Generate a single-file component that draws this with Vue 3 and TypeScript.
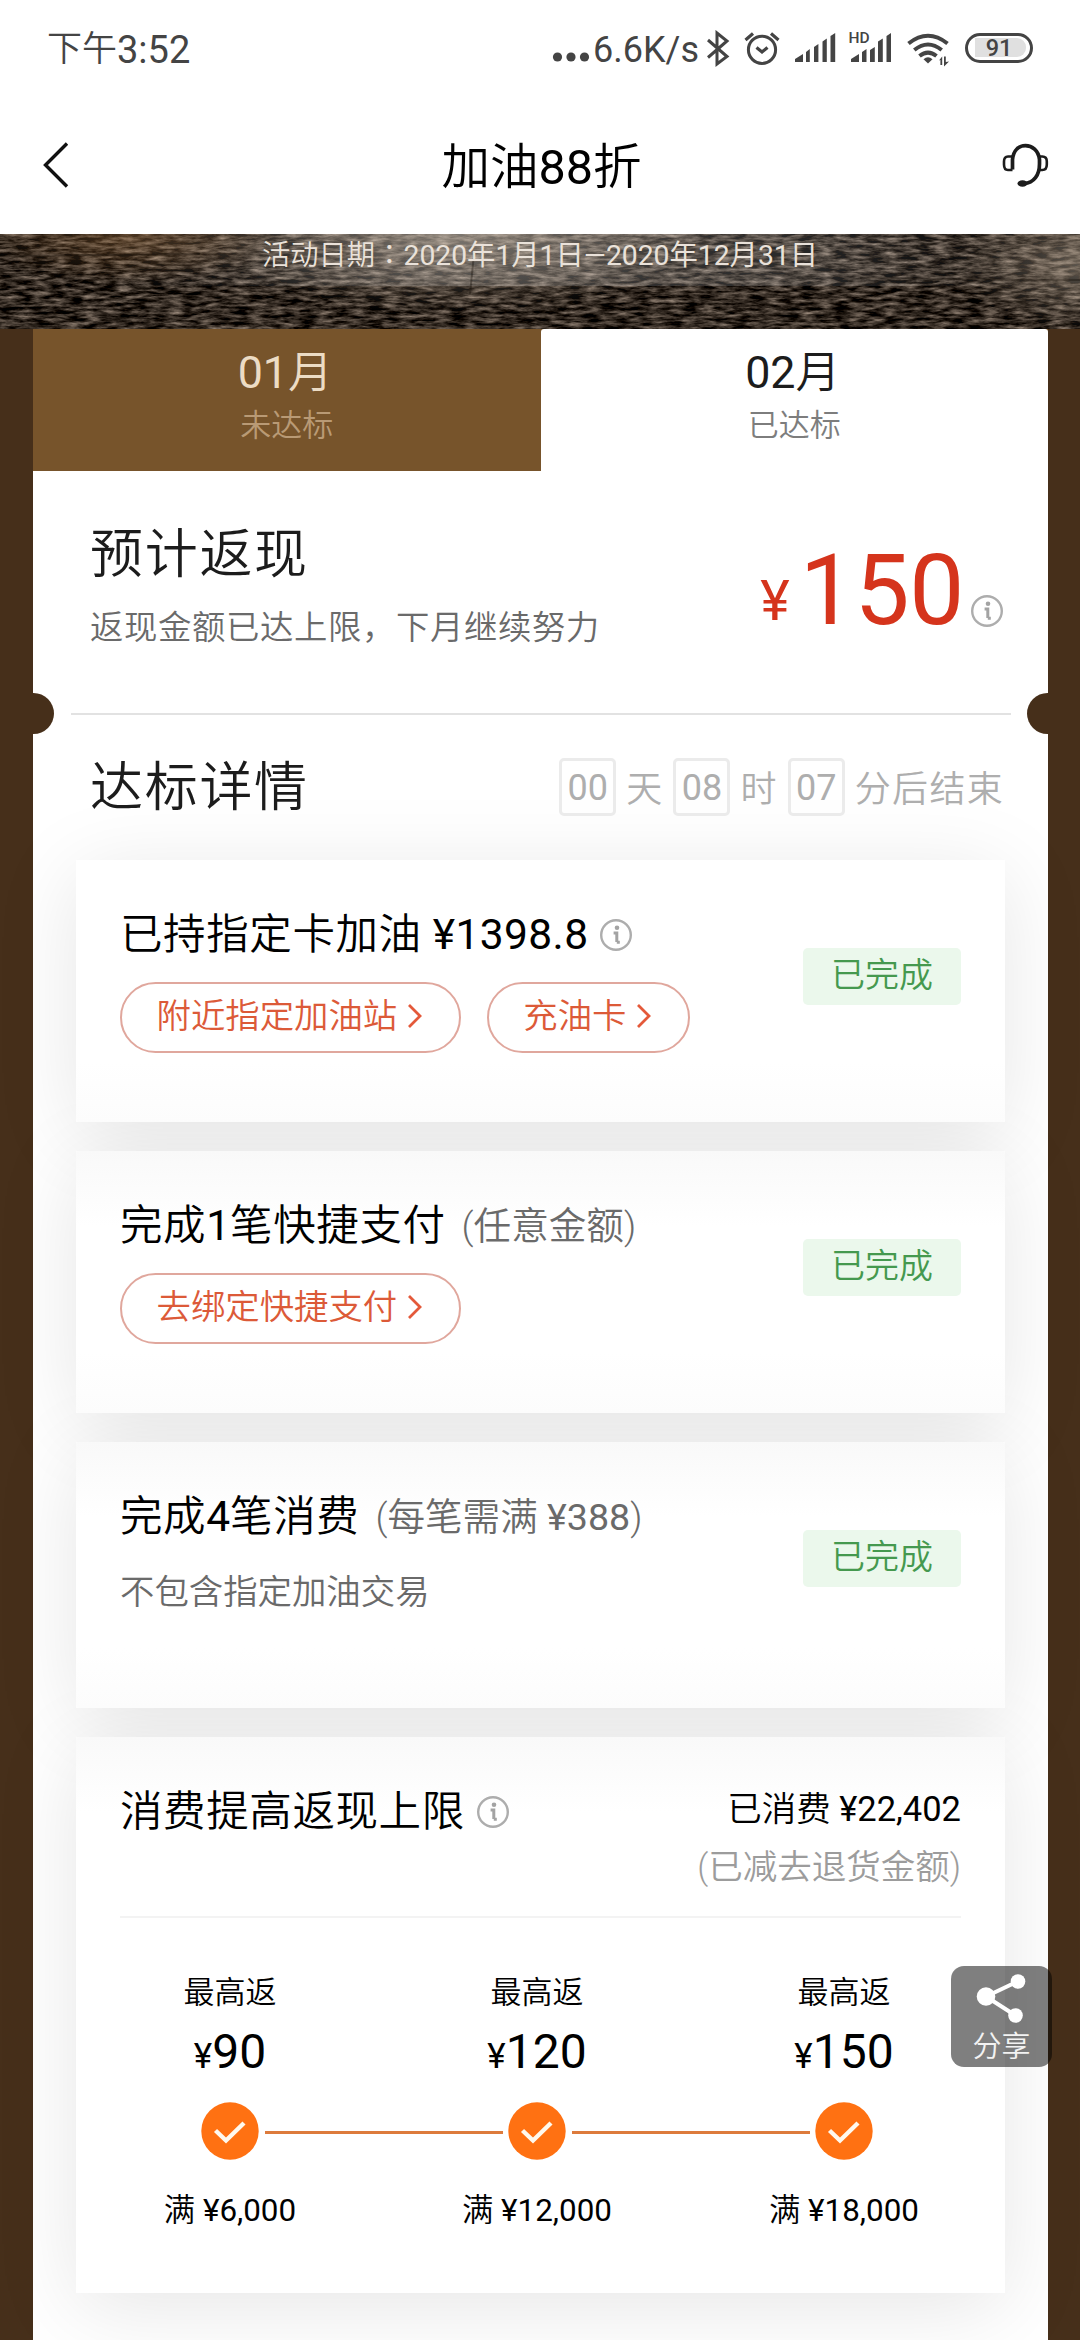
<script setup lang="ts">
import { h, type FunctionalComponent } from 'vue'

interface Task {
  id: string
  head: string
  count?: string
  tail?: string
  amount?: string
  info?: boolean
  note?: string
  noteAmount?: string
  desc?: string
  actions?: string[]
  height: number
}

interface Step {
  reward: string
  threshold: string
}

const months = [
  { num: '01', status: '未达标', active: false },
  { num: '02', status: '已达标', active: true },
]

const countdown = [
  { value: '00', unit: '天' },
  { value: '08', unit: '时' },
  { value: '07', unit: '分后结束' },
]

const tasks: Task[] = [
  { id: 'fuel', head: '已持指定卡加油', amount: '¥1398.8', info: true, actions: ['附近指定加油站', '充油卡'], height: 262 },
  { id: 'quick', head: '完成', count: '1', tail: '笔快捷支付', note: '任意金额', actions: ['去绑定快捷支付'], height: 262 },
  { id: 'spend', head: '完成', count: '4', tail: '笔消费', note: '每笔需满', noteAmount: '¥388', desc: '不包含指定加油交易', height: 266 },
]

const steps: Step[] = [
  { reward: '90', threshold: '6,000' },
  { reward: '120', threshold: '12,000' },
  { reward: '150', threshold: '18,000' },
]

const InfoIcon: FunctionalComponent = () =>
  h('svg', { width: 34, height: 34, viewBox: '0 0 34 34', fill: 'none' }, [
    h('circle', { cx: 17, cy: 17, r: 14.8, stroke: '#adadad', 'stroke-width': 2.4 }),
    h('circle', { cx: 18, cy: 9.8, r: 2.3, fill: '#a3a3a3' }),
    h('path', { d: 'M14.6 14.9h3.2v9.2M17.8 24.3h3', stroke: '#a3a3a3', 'stroke-width': 3 }),
  ])

const Chevron: FunctionalComponent = () =>
  h('svg', { width: 16, height: 26, viewBox: '0 0 16 26', fill: 'none' }, [
    h('path', { d: 'M2 2l11 11L2 24', stroke: '#e4593a', 'stroke-width': 2.8 }),
  ])
</script>

<template>
  <div class="screen">
    <header class="status">
      <div class="clock"><span class="clock-cn">下午</span>3:52</div>
      <div class="status-right">
        <svg class="dots" width="38" height="12" viewBox="0 0 38 12" fill="#444">
          <circle cx="5.5" cy="6" r="4.6" /><circle cx="19" cy="6" r="4.6" /><circle cx="32.5" cy="6" r="4.6" />
        </svg>
        <span class="speed">6.6K/s</span>
        <svg class="status-icons" width="260" height="40" viewBox="700 30 260 40" fill="none" stroke="#444">
          <path d="M707 40l19 16.5-10 7.5V33l10 8-19 16.5" stroke-width="3" />
          <circle cx="761" cy="49.8" r="13.6" stroke-width="3" />
          <path d="M744.5 40l7.5-6.5M770 33.5l7.5 6.5M755.5 47.5l5.5 4.5 5.5-4.5" stroke-width="3.2" />
          <g fill="#444" stroke="none">
            <path d="M794 62v-3l8-5v8zM805 52l3.8-3v13H805zM813 47l4.4-3v18H813zM821.5 41.5l4.3-3V62h-4.3zM829.5 36l4.7-3v29h-4.7z" />
            <path d="M850 62v-3l8-5v8zM861 52l4.5-3v13H861zM869 50l4.8-3v15H869zM877 41.5l4.8-3V62H877zM885.5 36l4.5-3v29h-4.5z" />
            <path d="M927 63.5l-4.5-4.3q4.500-3.800 9 0z" />
            <path d="M938 60.5l3.2-4V65h-1.8v-5zM943 56.5h1.8V62l3.2-.6-5 5z" />
          </g>
          <path d="M907.5 43.5q19.500-15.500 39 0M913.300 50q13.700-11 27.400 0M918.500 56q8.500-6.800 17 0" stroke-width="4" />
          <text x="847.5" y="43" class="hd">HD</text>
        </svg>
        <div class="battery"><span>91</span></div>
      </div>
    </header>

    <nav class="nav">
      <svg width="30" height="50" viewBox="0 0 30 50" fill="none" stroke="#111" stroke-width="3.4">
        <path d="M26 3.5L4.5 25 26 46.5" />
      </svg>
      <h1>加油<span>88</span>折</h1>
      <svg width="50" height="46" viewBox="0 0 50 46" fill="none" stroke="#1c1c1c" stroke-width="3.7">
        <path d="M11.5 27.5V17.5C12.5 8 18 3.6 24.5 3.6S37.5 8.5 38.5 17.5V22C38.5 33 33 41 23 41.5" />
        <path d="M11.5 14.5H7q-4 0-4 5v3q0 5.500 4 5.500h4.500M38.500 14.500h2.800q4.500 0 4.500 5v3q0 5.500-4.500 5.500H37" stroke-width="2.6" />
        <ellipse cx="21.5" cy="41.5" rx="5" ry="3.2" fill="#1c1c1c" stroke="none" />
      </svg>
    </nav>

    <section class="banner">
      <svg class="wood" width="1080" height="95" viewBox="0 0 1080 95">
        <defs>
          <filter id="grain" x="0" y="0" width="100%" height="100%" color-interpolation-filters="sRGB">
            <feTurbulence type="fractalNoise" baseFrequency="0.06 0.26" numOctaves="4" seed="8" />
            <feColorMatrix values="0.95 0 0 0 -0.28  0.88 0 0 0 -0.28  0.82 0 0 0 -0.28  0 0 0 0 1" />
          </filter>
          <radialGradient id="glowMid" cx="0.5" cy="0.5" r="0.5">
            <stop offset="0" stop-color="#d8c8b4" stop-opacity="0.45" />
            <stop offset="1" stop-color="#d8c8b4" stop-opacity="0" />
          </radialGradient>
          <radialGradient id="glowWarm" cx="0.5" cy="0.5" r="0.5">
            <stop offset="0" stop-color="#a87848" stop-opacity="0.4" />
            <stop offset="1" stop-color="#a87848" stop-opacity="0" />
          </radialGradient>
          <linearGradient id="veil" x1="0" x2="1" y1="0" y2="0">
            <stop offset="0" stop-color="#fff" stop-opacity="0" />
            <stop offset="0.35" stop-color="#fff" stop-opacity="0.18" />
            <stop offset="0.7" stop-color="#fff" stop-opacity="0.18" />
            <stop offset="1" stop-color="#fff" stop-opacity="0" />
          </linearGradient>
        </defs>
        <rect width="1080" height="95" filter="url(#grain)" />
        <ellipse cx="455" cy="0" rx="260" ry="80" fill="url(#glowMid)" />
        <ellipse cx="130" cy="0" rx="160" ry="50" fill="url(#glowWarm)" />
        <ellipse cx="1085" cy="28" rx="130" ry="70" fill="url(#glowMid)" />
        <rect x="100" width="940" height="52" fill="url(#veil)" />
        <path d="M0 22L200 20M860 44L1080 46M470 60l4-40" fill="none" stroke="#120b06" stroke-opacity="0.35" stroke-width="2" />
      </svg>
      <p>活动日期<span class="colon">：</span><span class="num">2020年1月1日—2020年12月31日</span></p>
    </section>

    <main class="panel">
      <div class="tabs">
        <div v-for="m in months" :key="m.num" class="tab" :class="{ active: m.active }">
          <div class="tab-month"><span class="num">{{ m.num }}</span>月</div>
          <div class="tab-status">{{ m.status }}</div>
        </div>
      </div>

      <section class="cashback">
        <div>
          <h2>预计返现</h2>
          <p>返现金额已达上限，下月继续努力</p>
        </div>
        <div class="total">
          <span class="yen">¥</span><span class="sum">150</span>
          <InfoIcon class="total-info" />
        </div>
      </section>

      <div class="tear"><i class="notch left"></i><hr /><i class="notch right"></i></div>

      <section class="detail-head">
        <h2>达标详情</h2>
        <div class="countdown">
          <template v-for="c in countdown" :key="c.unit">
            <b>{{ c.value }}</b><span>{{ c.unit }}</span>
          </template>
        </div>
      </section>

      <div class="cards">
        <article v-for="t in tasks" :key="t.id" class="card" :style="{ height: t.height + 'px' }">
          <div class="card-body">
            <h3>
              <span class="cn">{{ t.head }}</span><span v-if="t.count" class="num">{{ t.count }}</span><span v-if="t.tail" class="cn">{{ t.tail }}</span>
              <span v-if="t.amount" class="amount">{{ t.amount }}</span>
              <InfoIcon v-if="t.info" class="info" />
              <small v-if="t.note">({{ t.note }}<span v-if="t.noteAmount" class="num">&nbsp;{{ t.noteAmount }}</span>)</small>
            </h3>
            <div v-if="t.actions" class="actions">
              <a v-for="a in t.actions" :key="a">{{ a }}<Chevron /></a>
            </div>
            <p v-if="t.desc" class="desc">{{ t.desc }}</p>
          </div>
          <div class="done">已完成</div>
        </article>

        <article class="card limit">
          <div class="limit-head">
            <h3><span class="cn">消费提高返现上限</span><InfoIcon class="info" /></h3>
            <div class="spent">
              <div>已消费 <span class="num">¥22,402</span></div>
              <div class="refund">(已减去退货金额)</div>
            </div>
          </div>
          <div class="steps">
            <template v-for="(s, i) in steps" :key="s.reward">
              <div v-if="i" class="link"></div>
              <div class="step">
                <div class="step-label">最高返</div>
                <div class="step-reward"><span>¥</span>{{ s.reward }}</div>
                <svg width="58" height="58" viewBox="0 0 58 58">
                  <circle cx="29" cy="29" r="28.7" fill="#ff7112" />
                  <path d="M14.5 28.5L25 38.5 43 21" fill="none" stroke="#fff9ee" stroke-width="4.4" />
                </svg>
                <div class="step-need">满 <span class="num">¥{{ s.threshold }}</span></div>
              </div>
            </template>
          </div>
        </article>
      </div>
    </main>

    <div class="share">
      <svg width="60" height="56" viewBox="0 0 60 56" fill="#fff">
        <path d="M14 25.5L45.5 10.5M14 25.5L43.5 44.5" stroke="#fff" stroke-width="4" />
        <circle cx="14" cy="25.5" r="9.3" /><circle cx="46" cy="10.5" r="7.3" /><circle cx="43.5" cy="44.5" r="7.3" />
      </svg>
      <span>分享</span>
    </div>
  </div>
</template>

<style>
body {
  background: #fff;
}
</style>

<style scoped>
* {
  box-sizing: border-box;
}
.screen {
  position: relative;
  width: 1080px;
  height: 2340px;
  overflow: hidden;
  background: #462f1a;
  font-family: Roboto, 'Noto Sans CJK SC', sans-serif;
  font-weight: 350;
  font-size: 34px;
  color: #000;
}
h1, h2, h3, p, hr {
  margin: 0;
  font-weight: 350;
}
svg {
  display: block;
  flex: none;
}
.num {
  font-weight: 400;
}
.status {
  display: flex;
  justify-content: space-between;
  height: 96px;
  padding: 0 47px;
  background: #fff;
  color: #444;
}
.clock {
  display: flex;
  font-size: 38px;
  line-height: 100px;
  font-weight: 400;
}
.clock-cn {
  font-size: 35px;
  font-weight: 350;
}
.status-right {
  display: flex;
  align-items: flex-start;
}
.dots {
  margin-top: 51px;
  margin-right: 3px;
}
.speed {
  width: 108px;
  font-size: 36px;
  line-height: 100px;
  font-weight: 400;
}
.status-icons {
  margin-top: 30px;
}
.hd {
  fill: #444;
  stroke: none;
  font-size: 15.5px;
  font-weight: 500;
}
.battery {
  width: 68px;
  height: 30px;
  margin: 33px 0 0 4px;
  border: 3.5px solid #444;
  border-radius: 15px;
  padding: 2px 4px 2px 7px;
}
.battery span {
  display: block;
  height: 19px;
  border-radius: 0 9px 9px 0;
  background: #e0e0e0;
  font-size: 23.5px;
  font-weight: 500;
  line-height: 20px;
  text-align: center;
  padding-right: 3px;
}
.nav {
  display: flex;
  align-items: center;
  justify-content: space-between;
  height: 138px;
  padding: 0 29px 0 41px;
  background: #fff;
}
.nav h1 {
  margin: 5px 0 0 11px;
  font-size: 48.5px;
  line-height: 60px;
}
.nav h1 span {
  font-weight: 400;
}
.banner {
  position: relative;
  height: 95px;
}
.wood {
  position: absolute;
  inset: 0;
}
.banner p {
  position: relative;
  font-size: 28.3px;
  line-height: 44px;
  text-align: center;
  color: #eae2da;
}
.colon {
  font-family: 'Noto Sans CJK JP', sans-serif;
  line-height: 1;
}
.panel {
  width: 1015px;
  height: 2011px;
  margin-left: 33px;
  background: #fff;
  isolation: isolate;
}
.tabs {
  display: flex;
  height: 142px;
  background: #77542b;
}
.tab {
  flex: 1;
  text-align: center;
  color: #ecdcc5;
}
.tab.active {
  border-radius: 3px 3px 0 0;
  background: #fff;
  color: #1c1c1c;
}
.tab-month {
  font-size: 44.8px;
  line-height: 52px;
  padding: 18px 3px 0 0;
}
.tab-status {
  padding-top: 9px;
  font-size: 31px;
  line-height: 36px;
  color: #b99a75;
}
.active .tab-status {
  color: #7d7d7d;
}
.cashback {
  display: flex;
  justify-content: space-between;
  height: 222px;
  padding: 0 43px 0 57px;
}
h2 {
  color: #1c1c1c;
  font-size: 53px;
  letter-spacing: 1.7px;
  line-height: 64px;
}
.cashback h2 {
  padding-top: 52px;
}
.cashback p {
  margin-top: 21px;
  font-size: 33.4px;
  letter-spacing: 0.6px;
  line-height: 40px;
  color: #6a6a6a;
}
.total {
  display: flex;
  align-items: baseline;
  height: 222px;
  color: #d5341c;
  font-weight: 400;
}
.yen {
  font-size: 56px;
  margin-right: 10px;
  transform: translateY(-4px);
}
.sum {
  font-size: 98px;
  line-height: 240px;
  letter-spacing: -0.3px;
}
.total-info {
  margin: 0 1px 0 6px;
  transform: translateY(4px);
}
.tear {
  display: flex;
  align-items: center;
  justify-content: space-between;
  height: 41px;
}
.tear hr {
  width: 940px;
  height: 2px;
  border: 0;
  background: #e2e2e2;
}
.notch {
  width: 21px;
  height: 41px;
  background: #462f1a;
}
.notch.left {
  border-radius: 0 21px 21px 0;
}
.notch.right {
  border-radius: 21px 0 0 21px;
}
.detail-head {
  display: flex;
  align-items: center;
  justify-content: space-between;
  height: 106px;
  padding: 0 44px 0 57px;
}
.detail-head h2 {
  padding-top: 1px;
}
.countdown {
  display: flex;
  align-items: center;
  gap: 10px;
  color: #aeaeae;
  font-size: 36px;
  letter-spacing: 1.3px;
}
.countdown span {
  margin-top: -2px;
}
.countdown b {
  width: 57px;
  height: 58px;
  border: 3px solid #ebebeb;
  border-radius: 5px;
  text-align: center;
  line-height: 55px;
  font-weight: 400;
  letter-spacing: 0;
}
.cards {
  padding: 20px 43px 0;
  display: flex;
  flex-direction: column;
  gap: 29px;
}
.card {
  position: relative;
  display: flex;
  justify-content: space-between;
  padding: 44px 44px 0;
  border-radius: 4px;
  background: linear-gradient(#f9f9f9, #fff 75px, #fff calc(100% - 60px), #fcfcfc);
}
.card:first-child {
  background: linear-gradient(#fff, #fff calc(100% - 60px), #fcfcfc);
}
.card::before {
  content: '';
  position: absolute;
  inset: 0;
  z-index: -1;
  box-shadow: 0 14px 80px rgba(0, 0, 0, 0.1);
}
h3 {
  display: flex;
  align-items: center;
  height: 60px;
  padding-top: 1px;
  font-size: 42.5px;
  line-height: 60px;
}
.cn {
  letter-spacing: 0.6px;
}
.amount {
  margin-left: 11px;
  letter-spacing: 0.4px;
  font-weight: 400;
}
.info {
  margin: 1px 0 0 11px;
}
small {
  margin-left: 16px;
  font-size: 37.6px;
  color: #6a6a6a;
}
.actions {
  display: flex;
  gap: 26px;
  margin-top: 18px;
}
.actions a {
  display: flex;
  align-items: center;
  gap: 10px;
  height: 71px;
  border: 2px solid #e0a79d;
  border-radius: 36px;
  padding: 0 35.5px 4px 34.5px;
  font-size: 34.4px;
  line-height: 60px;
  color: #dc5a38;
}
.desc {
  margin-top: 26px;
  font-size: 34.4px;
  line-height: 40px;
  color: #6a6a6a;
}
.done {
  width: 158px;
  height: 57px;
  margin-top: 44px;
  border-radius: 5px;
  background: #ebf8ec;
  color: #45994f;
  text-align: center;
  font-size: 34px;
  line-height: 54px;
}
.limit {
  display: block;
  height: 556px;
  background: linear-gradient(#f9f9f9, #fff 75px);
}
.limit-head {
  display: flex;
  justify-content: space-between;
  height: 137px;
  border-bottom: 2px solid #f3f3f3;
}
.spent {
  text-align: right;
  font-size: 34.5px;
  line-height: 57.5px;
}
.refund {
  color: #9c9c9c;
}
.steps {
  display: flex;
  justify-content: center;
  margin-left: -7px;
}
.step {
  width: 62px;
  display: flex;
  flex-direction: column;
  align-items: center;
  white-space: nowrap;
}
.step-label {
  margin-top: 54px;
  font-size: 31px;
  line-height: 42px;
}
.step-reward {
  margin-top: 11px;
  margin-bottom: 18px;
  font-size: 48px;
  line-height: 54px;
  font-weight: 400;
}
.step-reward span {
  font-size: 35px;
}
.step-need {
  margin-top: 31px;
  font-size: 31.4px;
  line-height: 40px;
}
.link {
  width: 238px;
  height: 3px;
  margin: 213px 3.5px 0;
  background: #dd7b3c;
}
.share {
  position: absolute;
  left: 951px;
  top: 1966px;
  width: 101px;
  height: 101px;
  border-radius: 13px;
  background: rgba(0, 0, 0, 0.5);
  display: flex;
  flex-direction: column;
  align-items: center;
  color: #f2f2f2;
  padding-top: 5px;
}
.share span {
  font-size: 29px;
  line-height: 40px;
}
</style>
